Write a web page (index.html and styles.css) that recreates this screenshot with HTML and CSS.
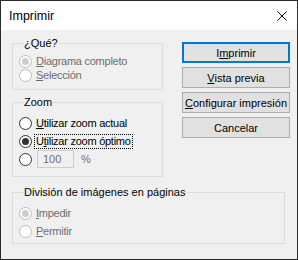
FILE: index.html
```html
<!DOCTYPE html>
<html lang="es">
<head>
    <meta charset="UTF-8">
    <title>Imprimir</title>
    <link rel="stylesheet" href="styles.css">
</head>
<body>
    <div class="window">
        <div class="titlebar">
            <span class="title">Imprimir</span>
            <svg class="close" width="10" height="10" viewBox="0 0 10 10">
                <path d="M0.5 0.5 L9.5 9.5 M9.5 0.5 L0.5 9.5" stroke="#000" stroke-width="1" fill="none"/>
            </svg>
        </div>

        <div class="content">
            <div class="top">
                <div class="left">
                    <fieldset class="group group-que">
                        <legend>¿Qué?</legend>
                        <label class="radio disabled checked"><span class="dot"></span><span class="text"><u>D</u>iagrama completo</span></label>
                        <label class="radio disabled"><span class="dot"></span><span class="text"><u>S</u>elección</span></label>
                    </fieldset>

                    <fieldset class="group group-zoom">
                        <legend>Zoom</legend>
                        <label class="radio"><span class="dot"></span><span class="text"><u>U</u>tilizar zoom actual</span></label>
                        <label class="radio checked"><span class="dot"></span><span class="text focus">U<u>t</u>ilizar zoom óptimo</span></label>
                        <label class="radio"><span class="dot"></span><span class="input">100</span><span class="percent">%</span></label>
                    </fieldset>
                </div>

                <div class="buttons">
                    <button class="btn default">I<u>m</u>primir</button>
                    <button class="btn"><u>V</u>ista previa</button>
                    <button class="btn"><u>C</u>onfigurar impresión</button>
                    <button class="btn">Cancelar</button>
                </div>
            </div>

            <fieldset class="group group-div">
                <legend>División de imágenes en páginas</legend>
                <label class="radio disabled checked"><span class="dot"></span><span class="text"><u>I</u>mpedir</span></label>
                <label class="radio disabled"><span class="dot"></span><span class="text"><u>P</u>ermitir</span></label>
            </fieldset>
        </div>
    </div>
</body>
</html>
```

FILE: styles.css
```css
* {
    margin: 0;
    padding: 0;
    box-sizing: border-box;
}

body {
    font-family: "Liberation Sans", Arial, sans-serif;
    font-size: 11px;
    color: #000;
    background: #fff;
}

.window {
    width: 298px;
    height: 260px;
    border: 1px solid #2b2b2b;
    background-color: #f0f0f0;
    display: flex;
    flex-direction: column;
}

.titlebar {
    height: 29px;
    background-color: #fff;
    display: flex;
    align-items: center;
    justify-content: space-between;
    padding: 0 10px 0 8px;
}

.title {
    font-size: 12.5px;
    margin-top: 1px;
}

.close {
    display: block;
    margin-top: 1px;
}

.content {
    padding-left: 11px;
}

.top {
    display: flex;
}

.left {
    width: 151px;
}

.group {
    border: 1px solid #dcdcdc;
    padding: 0 6px;
}

.group legend {
    font-size: 11px;
    line-height: 13px;
    padding: 0 1px;
    margin-left: 4px;
}

.group-que {
    margin-top: 7px;
    padding-top: 4px;
    padding-bottom: 7px;
}

.group-que .radio {
    height: 14px;
}

.group-zoom {
    margin-top: 6px;
    padding-top: 5px;
    padding-bottom: 8px;
}

.group-zoom .radio {
    height: 18px;
}

.group-div {
    width: 273px;
    margin-top: 9px;
    padding-top: 5px;
    padding-bottom: 3px;
}

.group-div .radio {
    height: 18px;
}

.radio {
    display: flex;
    align-items: center;
}

.dot {
    width: 13px;
    height: 13px;
    border: 1px solid #333;
    border-radius: 50%;
    background-color: #fff;
    display: flex;
    align-items: center;
    justify-content: center;
    flex-shrink: 0;
}

.checked .dot::after {
    content: "";
    width: 7px;
    height: 7px;
    border-radius: 50%;
    background-color: #333;
}

.disabled {
    color: #6d6d6d;
}

.disabled .dot {
    border-color: #bcbcbc;
}

.disabled.checked .dot::after {
    background-color: #cccccc;
}

.text {
    margin-left: 4px;
    line-height: 13px;
    letter-spacing: -0.25px;
}

.focus {
    outline: 1px dotted #000;
    outline-offset: 0;
    padding: 0 1px;
    margin-left: 3px;
}

.input {
    margin-left: 5px;
    width: 37px;
    height: 18px;
    border: 1px solid #cccccc;
    color: #6d6d6d;
    padding-left: 5px;
    line-height: 16px;
}

.percent {
    margin-left: 7px;
    color: #6d6d6d;
}

.buttons {
    margin-left: 19px;
    padding-top: 12px;
    display: flex;
    flex-direction: column;
    gap: 4px;
}

.btn {
    width: 108px;
    height: 21px;
    background-color: #e1e1e1;
    border: 1px solid #adadad;
    font-family: inherit;
    font-size: 11px;
    color: #000;
}

.btn.default {
    border: 2px solid #0078d7;
}
```
